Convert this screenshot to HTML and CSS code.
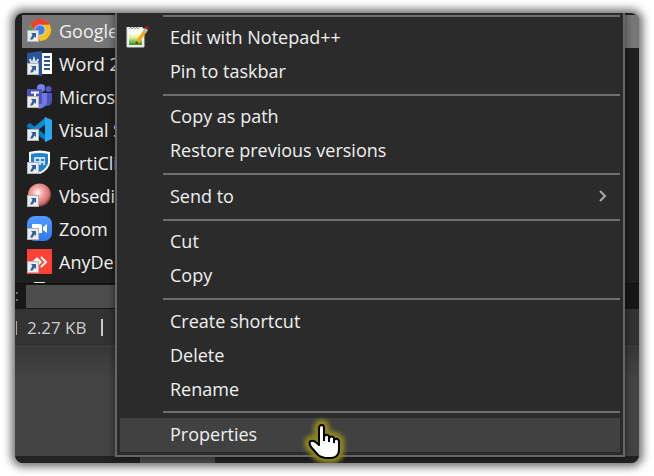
FILE: index.html
```html
<!DOCTYPE html>
<html lang="en">
<head>
<meta charset="utf-8">
<title>Context menu</title>
<link rel="stylesheet" href="styles.css">
</head>
<body>
<svg class="defs" aria-hidden="true">
  <defs>
    <symbol id="shortcut" viewBox="0 0 12 12">
      <path d="M0 0h12v12H0z" fill="#b4b4b4"/>
      <path d="M1 1h10v10H1z" fill="#ececec"/>
      <path d="M4 3h5v5L7.500 6.500 5.500 9.500H3L5.500 4.700z" fill="#2f5f9c"/>
    </symbol>
    <radialGradient id="ball" cx=".42" cy=".4" r=".65">
      <stop offset="0" stop-color="#fff"/><stop offset=".35" stop-color="#f8a8a8"/><stop offset=".75" stop-color="#d07474"/><stop offset="1" stop-color="#5a2828"/>
    </radialGradient>
    <linearGradient id="note" x1="0" y1="0" x2="0" y2="1">
      <stop offset="0" stop-color="#fff"/><stop offset=".4" stop-color="#e6f3a8"/><stop offset="1" stop-color="#1f9a18"/>
    </linearGradient>
    <linearGradient id="zoomBlue" x1="0" y1="0" x2="0" y2="1">
      <stop offset="0" stop-color="#529bff"/><stop offset="1" stop-color="#3079ee"/>
    </linearGradient>
  </defs>
</svg>
<main class="frame">
  <ul class="files">
    <li class="file selected">
      <svg class="icon" viewBox="0 0 25 25"><circle cx="13" cy="12" r="11" fill="#fbc116"/><path d="M3.500 6.500A11 11 0 0 1 22.600 6.500L13 7z" fill="#e94335"/><path d="M3.500 6.500L8.600 15 13 23A11 11 0 0 1 3.500 6.500z" fill="#30a651"/><path d="M3.500 6.500A11 11 0 0 1 13 1v6.500L8.500 14z" fill="#e94335"/><circle cx="13" cy="12" r="5.500" fill="#dce9ff"/><circle cx="13" cy="12" r="4.800" fill="#3d7fea"/><use href="#shortcut" y="12" width="12" height="12"/></svg>
      <span>Google</span>
    </li>
    <li class="file">
      <svg class="icon" viewBox="0 0 25 25"><path d="M14 2h11v21H14z" fill="#fff"/><path d="M17 6h6M17 10h6M17 14h6M17 18h6" stroke="#2c5699" stroke-width="2"/><path d="M0 2l15-2v25L0 23z" fill="#2a5699"/><path d="M3 8l2 6 2-6 2 6 2-6" fill="none" stroke="#dce6f6" stroke-width="2"/><use href="#shortcut" y="12" width="12" height="12"/></svg>
      <span>Word 2</span>
    </li>
    <li class="file">
      <svg class="icon" viewBox="0 0 25 25"><circle cx="21.500" cy="5" r="3" fill="#5059c9"/><circle cx="14" cy="4" r="4" fill="#7b83eb"/><path d="M17 9h8v8a5 5 0 0 1-8 4z" fill="#4952bd"/><path d="M7 9h13v8a7.500 7.500 0 0 1-13 5z" fill="#7479df"/><rect y="5" width="15" height="15" rx="1" fill="#4b53bc"/><path d="M4 8.500h8M8 8.500V17" stroke="#fff" stroke-width="2"/><use href="#shortcut" y="12" width="12" height="12"/></svg>
      <span>Micros</span>
    </li>
    <li class="file">
      <svg class="icon" viewBox="0 0 25 25"><path d="M0 8l3-2 17 13v6L0 10z" fill="#0879bf"/><path d="M0 16L19 0v7L3 19z" fill="#1489ce"/><path d="M18 0l7 3v19l-7 3z" fill="#27a9f1"/><use href="#shortcut" y="12" width="12" height="12"/></svg>
      <span>Visual S</span>
    </li>
    <li class="file">
      <svg class="icon" viewBox="0 0 25 25"><path d="M2 2Q13-1 23 2v11q-1 7-10 11Q3 21 2 13z" fill="#f5faff"/><path d="M4 4q9-2 17 0v9q-1 5-8 9-8-4-9-9z" fill="#2381cc"/><path d="M7 7h11v8H7z" fill="#bfe0fb"/><path d="M9 9h3v2H9zM14 9h3v2h-3zM9 13h2v2H9zM14 13h2v2h-2z" fill="#2381cc"/><use href="#shortcut" y="12" width="12" height="12"/></svg>
      <span>FortiCli</span>
    </li>
    <li class="file">
      <svg class="icon" viewBox="0 0 25 25"><circle cx="12.500" cy="12" r="11.500" fill="url(#ball)"/><use href="#shortcut" y="12" width="12" height="12"/></svg>
      <span>Vbsedi</span>
    </li>
    <li class="file">
      <svg class="icon" viewBox="0 0 25 25"><rect width="25" height="25" rx="8" fill="url(#zoomBlue)"/><path d="M5 8h8q2 0 2 2v7H7q-2 0-2-2zM16 11l4-3v9l-4-3z" fill="#fff"/><use href="#shortcut" y="12" width="12" height="12"/></svg>
      <span>Zoom</span>
    </li>
    <li class="file">
      <svg class="icon" viewBox="0 0 25 25"><path d="M0 0h25v25H0z" fill="#ff4136"/><path d="M10 8l5 5-5 5-5-5z" fill="#fff"/><path d="M14 8l5 5-5 5" fill="none" stroke="#fff" stroke-width="2"/><use href="#shortcut" y="12" width="12" height="12"/></svg>
      <span>AnyDe</span>
    </li>
    <li class="file">
      <svg class="icon" viewBox="0 0 25 25"><ellipse cx="12.500" cy="8" rx="10" ry="9" fill="#e6e6e6"/></svg>
    </li>
  </ul>
  <div class="scroll"><span class="dots">:</span><span class="thumb"></span></div>
  <footer class="status"><span class="edge"></span><span>2.27 KB</span><span class="divider"></span></footer>
  <div class="desktop"></div>
  <div class="taskbar"><span class="task"></span></div>

  <nav class="menu" aria-label="File actions">
    <hr class="top-rule">
    <button class="item" type="button"><svg class="note" viewBox="0 0 24 24"><path d="M1 2h15l2 2v18H1z" fill="#f7f7f2"/><path d="M3 7h13v13H3z" fill="url(#note)"/><path d="M3 4l2-2 1 2 2-2 1 2 2-2 1 2 2-2" fill="none" stroke="#999" stroke-width="1"/><path d="M1 2v20h17V10" fill="none" stroke="#d8d8d8"/><path d="M19 3l3 2-9 13-4 2 1-4z" fill="#f2aa24"/><path d="M19 3l3 2-2 3-3-2z" fill="#b6b6b6"/><path d="M20 1l3 1-1 3-3-2z" fill="#a91519"/><path d="M10 16l3 2-4 2z" fill="#654322"/></svg>Edit with Notepad++</button>
    <button class="item" type="button">Pin to taskbar</button>
    <hr>
    <button class="item" type="button">Copy as path</button>
    <button class="item" type="button">Restore previous versions</button>
    <hr>
    <button class="item" type="button">Send to<svg class="chevron" viewBox="0 0 8 12"><path d="M1 1l5 5-5 5" fill="none" stroke="#a9a9a9" stroke-width="2"/></svg></button>
    <hr>
    <button class="item" type="button">Cut</button>
    <button class="item" type="button">Copy</button>
    <hr>
    <button class="item" type="button">Create shortcut</button>
    <button class="item" type="button">Delete</button>
    <button class="item" type="button">Rename</button>
    <hr>
    <button class="item active" type="button">Properties</button>
  </nav>
  <svg class="cursor" viewBox="0 0 48 52" aria-hidden="true">
    <path class="glow" d="M16 37L9 29Q6 24 9 23Q12 22 17 27V10Q17 7 20 7Q22 7 22 10V19Q24 15 27 18V20Q30 17 32 20V22Q35 19 37 23V31Q37 41 26 40Q20 40 16 37z"/>
    <path class="hand" d="M16 37L9 29Q6 24 9 23Q12 22 17 27V10Q17 7 20 7Q22 7 22 10V19Q24 15 27 18V20Q30 17 32 20V22Q35 19 37 23V31Q37 41 26 40Q20 40 16 37z"/>
    <path d="M22 17v6M27 19v5M32 21v4" fill="none" stroke="#000" stroke-width="2"/>
  </svg>
</main>
</body>
</html>
```

FILE: styles.css
```css
* { box-sizing: border-box; }
body {
  margin: 0;
  padding: 13px 15px;
  height: 100vh;
  display: flex;
  background: #fff;
  font: 18px/32px "Open Sans", "Noto Sans", sans-serif;
  color: #f0f0f0;
}
.defs { position: absolute; width: 0; height: 0; }
.frame {
  flex: 1;
  position: relative;
  display: flex;
  flex-direction: column;
  overflow: hidden;
  border-radius: 8px;
  background: #202020;
}
body::before {
  content: "";
  position: absolute;
  inset: 13px 15px;
  border-radius: 8px;
  box-shadow: 0 0 8px 4px rgb(0 0 0 / 55%);
}
.files {
  flex: 0 0 270px;
  overflow: hidden;
  margin: 0;
  padding: 2px 0 0 7px;
  list-style: none;
}
.file {
  height: 33px;
  padding: 0 0 2px 5px;
  display: flex;
  align-items: center;
  gap: 7px;
  white-space: nowrap;
}
.selected { background: #777; }
.icon { width: 25px; height: 25px; flex: none; }
.scroll {
  flex: 0 0 26px;
  padding: 1px 0;
  display: flex;
  gap: 7px;
  background: #171717;
  border-top: 1px solid #101010;
}
.dots { width: 4px; font-size: 16px; line-height: 20px; color: #888; direction: rtl; }
.thumb { width: 300px; background: #4d4d4d; }
.status {
  flex: 0 0 38px;
  display: flex;
  align-items: center;
  gap: 12px;
  background: #333;
  border-bottom: 1px solid #424242;
  font-size: 17px;
  color: #ccc;
}
.edge { width: 2px; height: 14px; margin-right: -2px; border-right: 1px solid #b8a890; }
.divider { width: 2px; height: 17px; margin-left: 3px; background: #ccc; }
.desktop { flex: 1; background: linear-gradient(#383838, #444 32px); }
.taskbar { flex: 0 0 7px; background: #222; padding-left: 125px; display: flex; }
.task { width: 75px; background: #484848; }
.menu {
  position: absolute;
  inset: -3px 14px 6px 100px;
  padding: 3px;
  display: flex;
  flex-direction: column;
  background: #2b2b2b;
  border: 2px solid #666;
  box-shadow: 0 0 8px rgb(0 0 0 / 50%);
}
.menu hr {
  flex: 1;
  width: auto;
  margin: 0 0 0 43px;
  border: 0;
  background: linear-gradient(#6e6e6e, #6e6e6e) center / 100% 2px no-repeat;
}
.menu .top-rule { flex: 0 0 2px; margin-bottom: 4px; }
.item {
  flex: 0 0 34px;
  position: relative;
  display: flex;
  align-items: center;
  padding: 0 13px 2px 50px;
  border: 0;
  background: none;
  color: inherit;
  font: inherit;
  text-align: left;
}
.active { background: #414141; }
.note { position: absolute; left: 6px; top: 4px; width: 24px; height: 24px; }
.chevron { width: 8px; height: 12px; margin-left: auto; }
.cursor { position: absolute; left: 46%; bottom: -7px; width: 48px; height: 52px; overflow: visible; }
.glow { fill: #8c8520; stroke: #8c8520; stroke-width: 11px; stroke-linejoin: round; filter: blur(2px); }
.hand { fill: #fff; stroke: #000; stroke-width: 2px; stroke-linejoin: round; }
```
